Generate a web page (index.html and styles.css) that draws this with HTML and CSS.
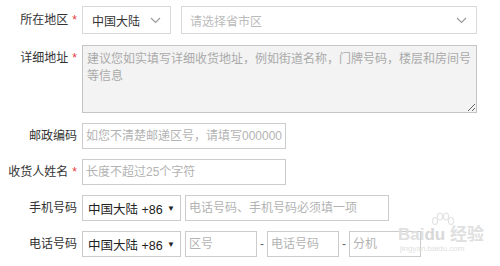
FILE: index.html
```html
<!DOCTYPE html>
<html lang="zh-CN">
<head>
  <meta charset="UTF-8">
  <title>收货地址</title>
  <link rel="stylesheet" href="styles.css">
</head>
<body>
  <form class="address-form">
    <!-- 所在地区 -->
    <div class="row">
      <label class="label">所在地区<span class="star">*</span></label>
      <div class="dropdown country">
        <span>中国大陆</span>
        <svg class="chevron" width="11" height="7" viewBox="0 0 11 7"><polyline points="1,1 5.5,5.5 10,1" fill="none" stroke="#999" stroke-width="1.1"/></svg>
      </div>
      <div class="dropdown region">
        <span class="muted">请选择省市区</span>
        <svg class="chevron" width="11" height="7" viewBox="0 0 11 7"><polyline points="1,1 5.5,5.5 10,1" fill="none" stroke="#999" stroke-width="1.1"/></svg>
      </div>
    </div>

    <!-- 详细地址 -->
    <div class="row row-top">
      <label class="label">详细地址<span class="star">*</span></label>
      <textarea class="detail" placeholder="建议您如实填写详细收货地址，例如街道名称，门牌号码，楼层和房间号等信息"></textarea>
    </div>

    <div class="row">
      <label class="label">邮政编码</label>
      <input class="field wide" type="text" placeholder="如您不清楚邮递区号，请填写000000">
    </div>

    <div class="row">
      <label class="label">收货人姓名<span class="star">*</span></label>
      <input class="field wide" type="text" placeholder="长度不超过25个字符">
    </div>

    <div class="row">
      <label class="label">手机号码</label>
      <div class="dropdown code">
        <span>中国大陆 +86</span>
        <span class="tri">▼</span>
      </div>
      <input class="field wide" type="text" placeholder="电话号码、手机号码必须填一项">
    </div>

    <div class="row">
      <label class="label">电话号码</label>
      <div class="dropdown code">
        <span>中国大陆 +86</span>
        <span class="tri">▼</span>
      </div>
      <input class="field area" type="text" placeholder="区号">
      <span class="dash">-</span>
      <input class="field tel" type="text" placeholder="电话号码">
      <span class="dash">-</span>
      <input class="field ext" type="text" placeholder="分机">
    </div>
  </form>

  <!-- watermark -->
  <div class="watermark">
    <svg class="paw" width="26" height="18" viewBox="0 0 26 18">
      <g fill="none" stroke="#e2e2e2" stroke-width="1.2">
        <ellipse cx="5" cy="9" rx="2.5" ry="3.5"/>
        <ellipse cx="10" cy="4.5" rx="2.5" ry="3.5"/>
        <ellipse cx="16" cy="4.5" rx="2.5" ry="3.5"/>
        <ellipse cx="21" cy="9" rx="2.5" ry="3.5"/>
      </g>
    </svg>
    <div class="wm-main">Bai<span class="wm-du">du</span> 经验</div>
    <div class="wm-sub">jingyan.baidu.com</div>
  </div>
</body>
</html>
```

FILE: styles.css
```css
* { margin: 0; padding: 0; box-sizing: border-box; }
body {
  font-family: "Liberation Sans", "Noto Sans CJK SC", sans-serif;
  font-size: 12px; color: #333; background: #fff;
  width: 500px; height: 266px; overflow: hidden; position: relative;
}

.address-form { padding-top: 6px; }

.row {
  display: flex; align-items: center;
  height: 26px; margin-bottom: 10px;
}
.row:first-child { height: 28px; margin-bottom: 11px; }
.row-top { align-items: flex-start; height: 68px; }

.label {
  width: 77px; text-align: right; margin-right: 5px;
  line-height: 17px; white-space: nowrap; color: #333;
}
.row-top .label { padding-top: 5px; }
.star { color: #e4393c; margin-left: 4px; }

/* fake selects */
.dropdown {
  display: flex; align-items: center; justify-content: space-between;
  height: 100%; border: 1px solid #d9d9d9; background: #fff;
}
.dropdown.country { width: 89px; padding: 0 9px 0 9px; }
.dropdown.region { width: 296px; margin-left: 10px; padding: 0 9px 0 8px; }
.dropdown.code { width: 99px; padding: 0 5px 0 5px; border-color: #ccc; font-size: 12.5px; color: #222; }
.muted { color: #bbb; }
.chevron { display: block; }
.tri { font-size: 8px; color: #222; }

.detail {
  width: 395px; height: 68px; resize: vertical;
  border: 1px solid #c4c4c4; background: #f3f3f3;
  font: inherit; line-height: 17px; padding: 5px 4px; color: #333;
}

.field {
  height: 100%; border: 1px solid #ccc; background: #fff;
  font: inherit; padding: 0 0 0 3px; color: #333; outline: none;
}
.row .code + .field { margin-left: 4px; }
.field.wide { width: 204px; }
.field.area { width: 72px; }
.field.tel { width: 72px; }
.field.ext { width: 72px; }
.dash { width: 10px; text-align: center; color: #666; }

::placeholder { color: #b3b3b3; }
.detail::placeholder { color: #aaa; }

/* watermark over the corner */
.watermark {
  position: absolute; left: 398px; top: 212px;
  color: #e0e0e0; white-space: nowrap; pointer-events: none;
}
.paw { display: block; margin: 0 0 -4px 32px; }
.wm-main { font-size: 17px; font-weight: bold; line-height: 18px; }
.wm-du { color: #d8d8d8; }
.wm-sub { font-size: 8px; line-height: 10px; padding-left: 2px; }
```
